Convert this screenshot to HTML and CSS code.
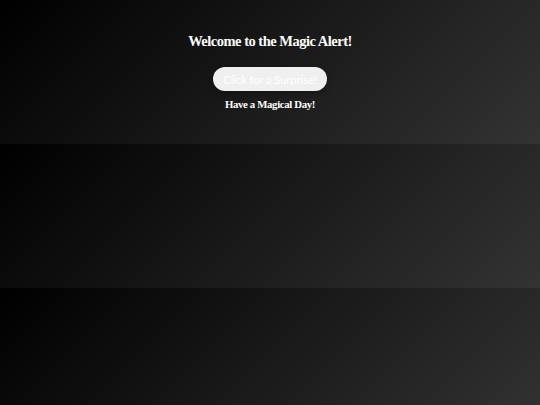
FILE: index.html
```html
<!DOCTYPE html>
<html>
<head>
<meta charset="utf-8">
<link rel="stylesheet" href="styles.css">
</head>
<body>
<div class="container">
  <h1 class="title">Welcome to the Magic Alert!</h1>
  <button class="magic-btn">Click for a Surprise!</button>
  <p class="footer">Have a Magical Day!</p>
</div>
</body>
</html>
```
FILE: styles.css
```css
body {
  margin: 0;
  padding: 30px 0 32px;
  background: linear-gradient(135deg, #000000, #333333);
  font-family: "Liberation Serif", serif;
  color: #ffffff;
}
.container {
  display: flex;
  flex-direction: column;
  align-items: center;
}
.title {
  margin: 0 0 15px;
  font-size: 14.5px;
  font-weight: bold;
  line-height: 22px;
  letter-spacing: -0.5px;
}
.magic-btn {
  width: 114px;
  height: 24px;
  border: none;
  border-radius: 12px;
  background: #efefef;
  color: #ffffff;
  font-family: Lato, sans-serif;
  font-size: 11px;
  padding: 0;
  box-shadow: 0 2px 6px rgba(0,0,0,0.3);
}
.footer {
  margin: 5px 0 0;
  font-size: 10.8px;
  font-weight: bold;
  line-height: 16px;
  letter-spacing: -0.35px;
}
```
